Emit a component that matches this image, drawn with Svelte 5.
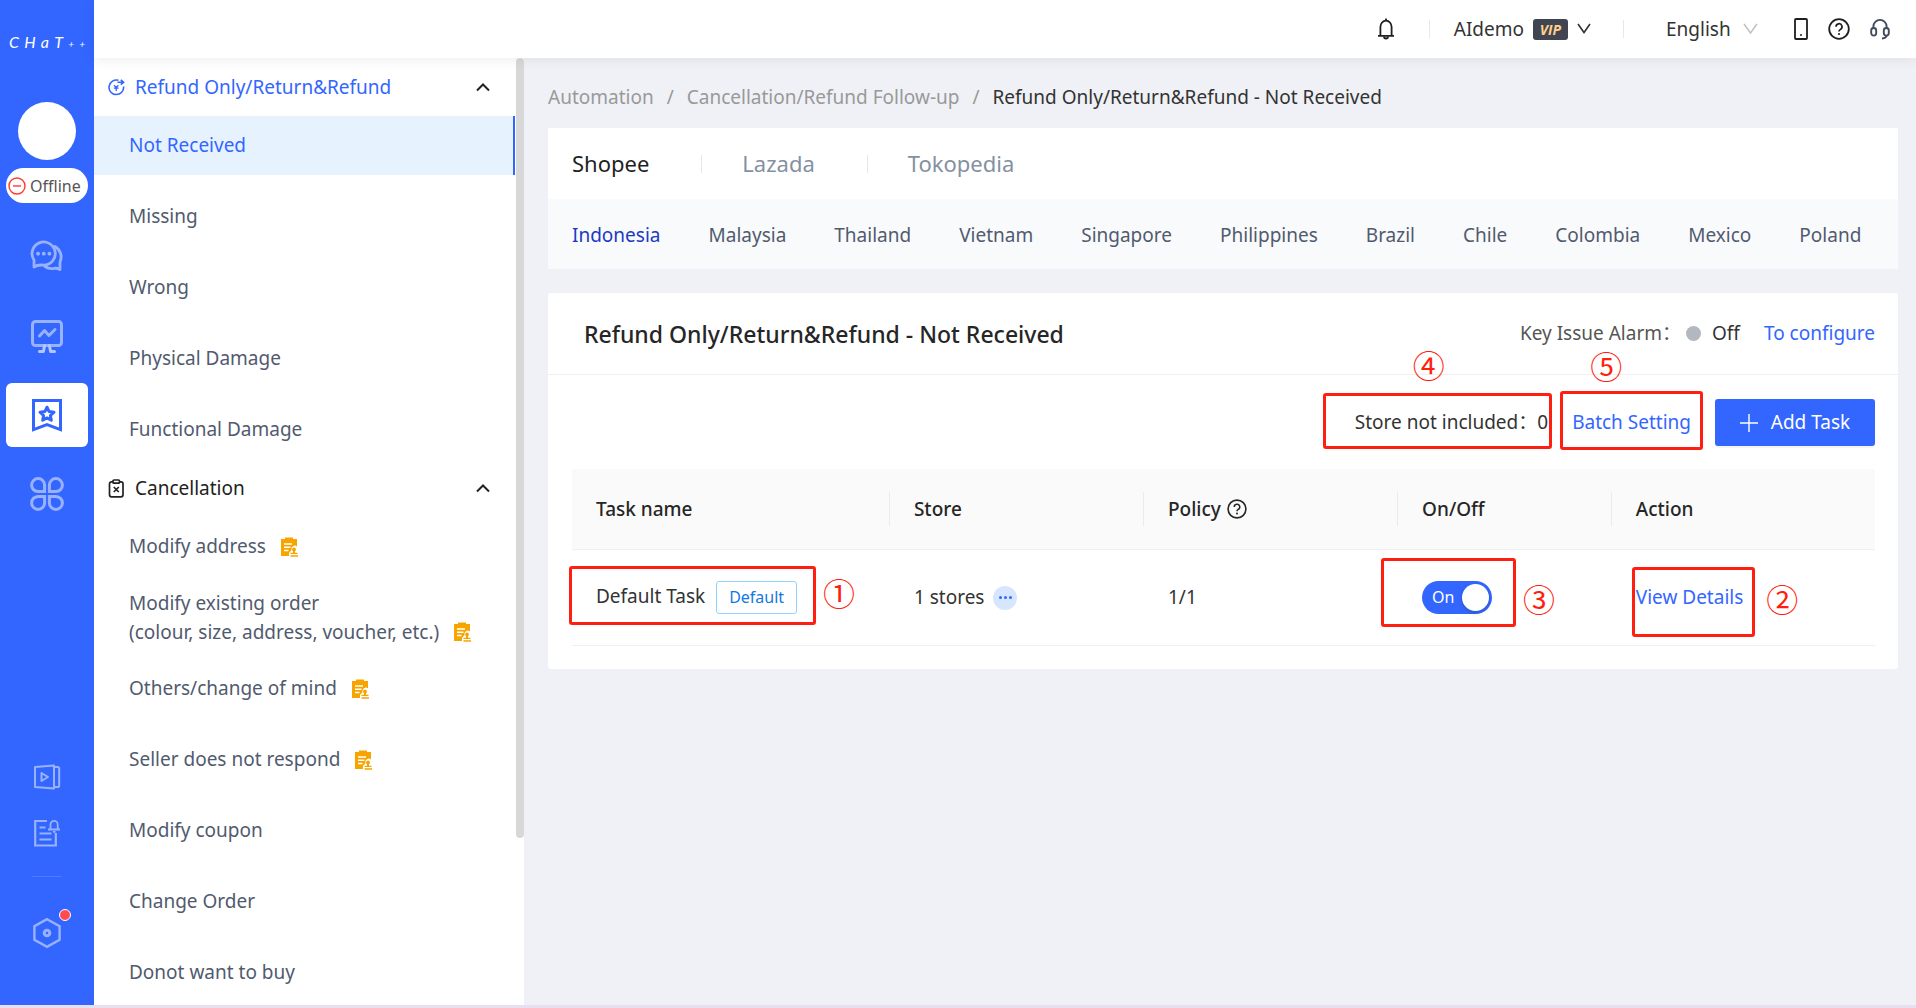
<script lang="ts">
  interface NavItem {
    label: string;
    detail?: string;
    manual?: boolean;
  }

  interface NavGroup {
    title: string;
    icon: 'refund' | 'cancel';
    items: NavItem[];
  }

  const groups: NavGroup[] = [
    {
      title: 'Refund Only/Return&Refund',
      icon: 'refund',
      items: [
        { label: 'Not Received' },
        { label: 'Missing' },
        { label: 'Wrong' },
        { label: 'Physical Damage' },
        { label: 'Functional Damage' }
      ]
    },
    {
      title: 'Cancellation',
      icon: 'cancel',
      items: [
        { label: 'Modify address', manual: true },
        {
          label: 'Modify existing order',
          detail: '(colour, size, address, voucher, etc.)',
          manual: true
        },
        { label: 'Others/change of mind', manual: true },
        { label: 'Seller does not respond', manual: true },
        { label: 'Modify coupon' },
        { label: 'Change Order' },
        { label: 'Donot want to buy' }
      ]
    }
  ];

  const platforms = ['Shopee', 'Lazada', 'Tokopedia'];
  const countries = [
    'Indonesia',
    'Malaysia',
    'Thailand',
    'Vietnam',
    'Singapore',
    'Philippines',
    'Brazil',
    'Chile',
    'Colombia',
    'Mexico',
    'Poland'
  ];

  let selected = $state('Not Received');
  let platform = $state('Shopee');
  let country = $state('Indonesia');
  let closed = $state<string[]>([]);
  let taskOn = $state(true);

  function toggleGroup(title: string) {
    closed = closed.includes(title) ? closed.filter((t) => t !== title) : [...closed, title];
  }
</script>

{#snippet question(size: number)}
  <svg width={size} height={size} viewBox="0 0 22 22" fill="none" stroke="currentColor" stroke-width="1.8">
    <circle cx="11" cy="11" r="9.8" />
    <path d="M8 8.8a3 3 0 1 1 4.4 2.6c-1 .5-1.4 1-1.4 2.1" stroke-width="1.7" />
    <circle cx="11" cy="16" r="1.1" fill="currentColor" stroke="none" />
  </svg>
{/snippet}

<div class="app">
  <aside class="rail">
    <a class="logo" href="#home" aria-label="Chat++">
      <span>C</span><span>H</span><span>a</span><span>T</span><span>+</span><span>+</span>
    </a>
    <div class="avatar"></div>
    <button class="status">
      <svg width="18" height="18" viewBox="0 0 18 18" fill="none" stroke="#ff3b30" stroke-width="1.4">
        <circle cx="9" cy="9" r="8" />
        <path d="M5 9h8" />
      </svg>
      Offline
    </button>

    <nav class="rail-main">
      <a href="#chat" aria-label="Chat">
        <svg width="36" height="36" viewBox="0 0 36 36" fill="none" stroke="currentColor" stroke-width="2.8" stroke-linejoin="round" stroke-linecap="round">
          <path d="M5 28V21A11.6 11.6 0 1 1 14.7 26.2Q9 25.3 5 28z" />
          <path d="M26 7.5A12 12 0 0 1 31 23V30.5Q28 28.8 25 29.4Q20 30.2 16 27.5" />
          <path d="M9 14.7h.1M14.7 14.7h.1M20.4 14.7h.1" stroke-width="3.8" />
        </svg>
      </a>
      <a href="#data" aria-label="Data">
        <svg width="36" height="36" viewBox="0 0 36 36" fill="none" stroke="currentColor" stroke-width="3" stroke-linejoin="round" stroke-linecap="round">
          <rect x="3.5" y="3.5" width="29" height="24" rx="3" />
          <path d="M10.5 18 15.5 12.5 20 17.5 26 11.5" />
          <path d="M15.6 27.5 14.4 33.5H10.5M20.4 27.5 21.6 33.5H25.5" stroke="#b3c6ff" />
        </svg>
      </a>
      <a class="active" href="#automation" aria-label="Automation">
        <svg width="30" height="33" viewBox="0 0 30 33" fill="none" stroke="currentColor" stroke-width="3">
          <path d="M1.5 1.5H28.5V30.6L15 25.6 1.5 30.6z" />
          <path d="M15 8.2 17.1 12.6 22 13.2 18.4 16.5 19.3 21.2 15 18.9 10.7 21.2 11.6 16.5 8 13.2 12.9 12.6z" stroke-linejoin="round" />
        </svg>
      </a>
      <a href="#apps" aria-label="Apps">
        <svg width="36" height="36" viewBox="0 0 36 36" fill="none" stroke="currentColor" stroke-width="3">
          <path d="M15.6 15.6H9a6.5 6.5 0 1 1 6.6-6.5z" />
          <path d="M20.4 15.6H27a6.5 6.5 0 1 0-6.6-6.5z" />
          <path d="M15.6 20.4H9a6.5 6.5 0 1 0 6.6 6.5z" />
          <path d="M20.4 20.4H27a6.5 6.5 0 1 1-6.6 6.5z" />
        </svg>
      </a>
    </nav>

    <div class="rail-foot">
      <a href="#tutorials" aria-label="Tutorials">
        <svg width="28" height="26" viewBox="0 0 28 26" fill="none" stroke="currentColor" stroke-width="2" stroke-linejoin="round">
          <path d="M2 3 21 1.6V24.4L2 23z" />
          <path d="M22 3h2.6a1.6 1.6 0 0 1 1.6 1.6v16.8a1.6 1.6 0 0 1-1.6 1.6H22" />
          <path d="M8.5 9v8l6.5-4z" />
        </svg>
      </a>
      <a href="#releases" aria-label="Release notes">
        <svg width="28" height="28" viewBox="0 0 28 28" fill="none" stroke="currentColor" stroke-width="2.2">
          <path d="M14 2H2.2V26.5H22.8V14" />
          <path d="M6.5 8.5h6M6.5 14.5h12M6.5 20.5h12" />
          <path d="M17.5 10V5.5a3.6 3.6 0 0 1 7.2 0V10M15 10.5h12M20 12.8h2.5" stroke-width="1.8" />
        </svg>
      </a>
      <hr />
      <a class="settings" href="#settings" aria-label="Settings">
        <svg width="30" height="32" viewBox="0 0 30 32" fill="none" stroke="currentColor" stroke-width="2.4">
          <path d="M15 2.2 27.6 9.2V22.8L15 29.8 2.4 22.8V9.2z" />
          <circle cx="15" cy="16" r="2.8" stroke-width="3" />
        </svg>
        <span class="dot"></span>
      </a>
    </div>
  </aside>

  <div class="page">
    <header class="topbar">
      <button class="icon-btn bell" aria-label="Notifications">
        <svg width="18" height="22" viewBox="0 0 18 22" fill="none" stroke="currentColor" stroke-width="1.8">
          <path d="M3.4 17.5V9a5.6 6.4 0 0 1 11.2 0v8.5M1 17.8h16M9 .6v2.2" />
          <path d="M7 18.5a2 2 0 0 0 4 0" />
        </svg>
      </button>
      <span class="rule"></span>
      <button class="account">
        AIdemo
        <span class="vip">VIP</span>
        <svg width="14" height="12" viewBox="0 0 14 12" fill="none" stroke="currentColor" stroke-width="1.6">
          <path d="M1 1l6 8.5L13 1" />
        </svg>
      </button>
      <span class="rule"></span>
      <label class="language">
        <select aria-label="Language">
          <option>English</option>
          <option>中文</option>
        </select>
        <svg width="15" height="12" viewBox="0 0 15 12" fill="none" stroke="#bfbfbf" stroke-width="1.4">
          <path d="M1 1l6.5 9L14 1" />
        </svg>
      </label>
      <div class="tools">
        <button class="icon-btn" aria-label="Mobile app">
          <svg width="14" height="22" viewBox="0 0 14 22" fill="none" stroke="currentColor" stroke-width="1.8">
            <rect x="1" y="1" width="12" height="20" rx="1" />
            <circle cx="7" cy="17" r="1" fill="currentColor" stroke="none" />
          </svg>
        </button>
        <button class="icon-btn" aria-label="Help">{@render question(22)}</button>
        <button class="icon-btn support" aria-label="Support">
          <svg width="20" height="22" viewBox="0 0 20 22" fill="none" stroke="currentColor" stroke-width="1.9">
            <path d="M3.4 10V8.5a6.6 6.6 0 0 1 13.2 0V10" />
            <rect x="1.2" y="10" width="5" height="7.6" rx="2.5" />
            <rect x="13.8" y="10" width="5" height="7.6" rx="2.5" />
            <path d="M16.8 17.5c-.6 1.8-2 2.9-4.8 3" />
          </svg>
        </button>
      </div>
    </header>

    <div class="body">
      <nav class="menu">
        {#each groups as group}
          <button
            class="group"
            class:current={group.icon === 'refund'}
            aria-expanded={!closed.includes(group.title)}
            onclick={() => toggleGroup(group.title)}
          >
            {#if group.icon === 'refund'}
              <svg width="17" height="17" viewBox="0 0 17 17" fill="none" stroke="currentColor" stroke-width="1.6">
                <path d="M10.5 1.3A7.3 7.3 0 1 0 15.6 7.5" />
                <path d="M9.5 3.2h6M12.8.8l2.8 2.4-2.8 2.4" />
                <path d="M6 6.2l2.2 2.3 2.2-2.3M8.2 8.5v3.6M5.8 9.2h4.8" stroke-width="1.3" />
              </svg>
            {:else}
              <svg width="17" height="19" viewBox="0 0 17 19" fill="none" stroke="currentColor" stroke-width="1.7">
                <rect x="1.5" y="2.8" width="13.5" height="15" rx="2" />
                <rect x="5" y="1" width="6.5" height="3.2" rx="1" fill="#fff" />
                <path d="M5.8 8l5 5M10.8 8l-5 5" />
              </svg>
            {/if}
            <span>{group.title}</span>
            <svg class="chevron" width="14" height="9" viewBox="0 0 14 9" fill="none" stroke="#222" stroke-width="2">
              <path d="M1 7.5l6-6 6 6" />
            </svg>
          </button>
          {#if !closed.includes(group.title)}
            <ul>
              {#each group.items as item}
                <li>
                  <a
                    href="#{item.label}"
                    class:selected={selected === item.label}
                    onclick={() => (selected = item.label)}
                  >
                    <span>
                      {item.label}
                      {#if item.detail}<br />{item.detail}{/if}
                    </span>
                    {#if item.manual}
                      <svg class:low={item.detail} width="17" height="20" viewBox="0 0 17 20" fill="#f7a400">
                        <path d="M0 2h4V.5h8V2h4v7.5a3.4 3.4 0 0 0-5.5 3.5l-2.5 3V19H0z" />
                        <path d="M3 7h8M3 10.2h6.5M3 13.4h4.5" stroke="#fff" stroke-width="1.5" />
                        <path d="M13 10.5a2 2 0 0 1 1 3.7v1.6h2.5V17h-7v-1.2H12v-1.6a2 2 0 0 1 1-3.7z" />
                        <path d="M9.5 18.2h7.5v1.5H9.5z" />
                      </svg>
                    {/if}
                  </a>
                </li>
              {/each}
            </ul>
          {/if}
        {/each}
        <div class="thumb"></div>
      </nav>

      <main>
        <ol class="crumbs">
          <li><a href="#automation">Automation</a></li>
          <li><a href="#follow-up">Cancellation/Refund Follow-up</a></li>
          <li aria-current="page">Refund Only/Return&amp;Refund - Not Received</li>
        </ol>

        <section class="filters">
          <div class="platforms">
            {#each platforms as name}
              <button class:on={platform === name} onclick={() => (platform = name)}>{name}</button>
            {/each}
          </div>
          <div class="countries">
            {#each countries as name}
              <button class:on={country === name} onclick={() => (country = name)}>{name}</button>
            {/each}
          </div>
        </section>

        <section class="card">
          <div class="card-head">
            <h1>Refund Only/Return&amp;Refund - Not Received</h1>
            <div class="alarm">
              <span class="alarm-label">Key Issue Alarm：</span>
              <span class="alarm-dot"></span>
              <span>Off</span>
              <a href="#configure">To configure</a>
            </div>
          </div>

          <div class="actions">
            <span class="marked stores-out">
              Store not included：0
              <span class="frame"></span>
              <span class="num">④</span>
            </span>
            <span class="marked batch">
              <a href="#batch">Batch Setting</a>
              <span class="frame"></span>
              <span class="num">⑤</span>
            </span>
            <button class="add">
              <svg width="18" height="18" viewBox="0 0 18 18" stroke="currentColor" stroke-width="1.4">
                <path d="M9 0v18M0 9h18" />
              </svg>
              Add Task
            </button>
          </div>

          <table>
            <thead>
              <tr>
                <th class="w-task">Task name</th>
                <th class="w-store">Store</th>
                <th class="w-policy"><span class="with-icon">Policy {@render question(20)}</span></th>
                <th class="w-switch">On/Off</th>
                <th>Action</th>
              </tr>
            </thead>
            <tbody>
              <tr>
                <td>
                  <span class="marked task">
                    Default Task <span class="tag">Default</span>
                    <span class="frame"></span>
                    <span class="num">①</span>
                  </span>
                </td>
                <td>
                  <span class="stores">
                    1 stores
                    <button class="more" aria-label="Show stores"><i></i><i></i><i></i></button>
                  </span>
                </td>
                <td>1/1</td>
                <td>
                  <span class="marked toggle">
                    <label class="switch" class:off={!taskOn}>
                      <input type="checkbox" role="switch" bind:checked={taskOn} />
                      <span>{taskOn ? 'On' : 'Off'}</span>
                      <span class="knob"></span>
                    </label>
                    <span class="frame"></span>
                    <span class="num">③</span>
                  </span>
                </td>
                <td>
                  <span class="marked view">
                    <a href="#details">View Details</a>
                    <span class="frame"></span>
                    <span class="num">②</span>
                  </span>
                </td>
              </tr>
            </tbody>
          </table>
        </section>
      </main>
    </div>
  </div>
</div>

<style>
  :global(body) {
    margin: 0;
  }

  .app {
    --blue: #3366ff;
    --mark: #ff1f10;
    display: flex;
    height: 100vh;
    box-sizing: border-box;
    border-bottom: 3px solid #e8e0f1;
    overflow: hidden;
    font-family: 'Noto Sans', 'Noto Sans CJK SC', sans-serif;
    font-size: 19px;
    line-height: 29px;
    color: #333;
    background: #eff1f6;
  }

  .app * {
    box-sizing: border-box;
  }

  svg {
    display: block;
    flex: none;
  }

  button,
  select {
    font: inherit;
    color: inherit;
    border: 0;
    padding: 0;
    background: none;
    cursor: pointer;
  }

  a {
    color: var(--blue);
    text-decoration: none;
  }

  ul,
  ol {
    list-style: none;
    margin: 0;
    padding: 0;
  }

  /* left rail */
  .rail {
    display: flex;
    flex-direction: column;
    align-items: center;
    flex: none;
    width: 94px;
    padding-top: 32px;
    background: var(--blue);
  }

  .logo {
    display: flex;
    align-items: center;
    justify-content: space-between;
    width: 76px;
    height: 20px;
    color: #fff;
    font: italic 16px/20px Lato, sans-serif;
  }

  .logo span:nth-child(n + 5) {
    font-size: 10px;
    line-height: 10px;
    padding-top: 4px;
  }

  .avatar {
    width: 58px;
    height: 58px;
    margin-top: 50px;
    border-radius: 50%;
    background: #fff;
  }

  .status {
    display: flex;
    align-items: center;
    gap: 4px;
    width: 82px;
    height: 35px;
    margin-top: 8px;
    padding: 1px 0 0 2px;
    border-radius: 18px;
    background: #fff;
    color: #555;
    font-size: 16px;
  }

  .rail-main {
    display: flex;
    flex-direction: column;
    align-items: center;
    gap: 15px;
    margin-top: 22px;
  }

  .rail-main a {
    display: flex;
    align-items: center;
    justify-content: center;
    width: 82px;
    height: 64px;
    border-radius: 6px;
    color: #99b2ff;
  }

  .rail-main a.active {
    background: #fff;
    color: var(--blue);
  }

  .rail-foot {
    display: flex;
    flex-direction: column;
    align-items: center;
    margin-top: auto;
    margin-bottom: 56px;
  }

  .rail-foot a {
    position: relative;
    display: block;
    margin-bottom: 29px;
    color: #99b2ff;
  }

  .rail-foot hr {
    width: 30px;
    height: 1px;
    margin: 0 0 40px;
    border: 0;
    background: #4d7aff;
  }

  .rail-foot .settings {
    margin: 0;
  }

  .dot {
    position: absolute;
    top: -8px;
    right: -9px;
    width: 12px;
    height: 12px;
    border: 1px solid #fff;
    border-radius: 50%;
    background: #ff4d4f;
  }

  /* top bar */
  .page {
    display: flex;
    flex-direction: column;
    flex: 1;
    min-width: 0;
  }

  .topbar {
    position: relative;
    z-index: 1;
    display: flex;
    align-items: center;
    justify-content: flex-end;
    flex: none;
    height: 58px;
    padding-right: 26px;
    background: #fff;
    box-shadow: 0 2px 12px rgba(0, 21, 41, 0.07);
  }

  .bell {
    margin-right: 34px;
  }

  .rule {
    width: 1px;
    height: 18px;
    background: #e8e8e8;
  }

  .account {
    display: flex;
    align-items: center;
    gap: 9px;
    margin: 0 32px 0 24px;
  }

  .vip {
    width: 35px;
    height: 21px;
    border-radius: 3px;
    background: #414552;
    color: #ffd08a;
    font: italic bold 14px/21px 'Open Sans', sans-serif;
    text-align: center;
  }

  .language {
    display: flex;
    align-items: center;
    gap: 12px;
    margin: 0 36px 0 42px;
  }

  select {
    appearance: none;
    outline: none;
  }

  .tools {
    display: flex;
    align-items: center;
    gap: 20px;
  }

  .icon-btn {
    color: #1f1f1f;
  }

  .support {
    color: #3f4a5e;
  }

  /* menu */
  .body {
    display: flex;
    flex: 1;
    min-height: 0;
  }

  .menu {
    position: relative;
    flex: none;
    width: 430px;
    padding-right: 9px;
    overflow: hidden;
    background: #fff;
  }

  .group {
    display: flex;
    align-items: center;
    gap: 10px;
    width: 100%;
    height: 58px;
    padding: 0 25px 0 14px;
    text-align: left;
    color: #222;
  }

  .group.current {
    color: var(--blue);
  }

  .group span {
    flex: 1;
  }

  .menu ul {
    display: grid;
    gap: 12px;
  }

  .menu li a {
    display: flex;
    align-items: center;
    gap: 15px;
    height: 59px;
    padding-left: 35px;
    color: #515a6e;
    border-right: 2px solid transparent;
  }

  .menu li a.selected {
    color: var(--blue);
    background: #e7f2ff;
    border-color: var(--blue);
  }

  .low {
    align-self: flex-end;
    margin-bottom: 5px;
  }

  .thumb {
    position: absolute;
    top: 0;
    right: 0;
    width: 8px;
    height: 82.4%;
    border-radius: 4px;
    background: #d8d8d8;
  }

  /* content */
  main {
    flex: 1;
    min-width: 0;
    padding: 25px 18px 0 24px;
  }

  .crumbs {
    display: flex;
    color: #333;
  }

  .crumbs a,
  .crumbs li + li::before {
    color: #999;
  }

  .crumbs li + li::before {
    content: '/';
    margin: 0 13px;
  }

  .filters {
    margin-top: 16px;
    background: #fff;
  }

  .platforms {
    display: flex;
    align-items: center;
    height: 71px;
    padding-left: 24px;
    font-size: 22px;
    color: #8590a2;
  }

  .platforms button {
    display: flex;
    align-items: center;
  }

  .platforms .on {
    color: #1f1f1f;
  }

  .platforms button + button::before {
    content: '';
    width: 1px;
    height: 18px;
    margin: 0 40px 0 52px;
    background: #e8e8e8;
  }

  .countries {
    display: flex;
    align-items: center;
    gap: 48px;
    height: 70px;
    padding: 2px 0 0 24px;
    background: #f9fafc;
    color: #515a6e;
  }

  .countries .on {
    color: #1d39c4;
  }

  .card {
    margin-top: 24px;
    padding-bottom: 23px;
    border-radius: 3px;
    background: #fff;
  }

  .card-head {
    display: flex;
    align-items: center;
    justify-content: space-between;
    height: 82px;
    padding: 0 23px 0 36px;
    border-bottom: 1px solid #f0f0f0;
  }

  h1 {
    margin: 0;
    font-size: 23px;
    line-height: 32px;
    font-weight: 500;
    color: #262626;
  }

  .alarm {
    display: flex;
    align-items: center;
  }

  .alarm-label {
    color: #555;
  }

  .alarm-dot {
    width: 15px;
    height: 15px;
    margin: 0 11px 0 5px;
    border-radius: 50%;
    background: #b3b7c0;
  }

  .alarm a {
    margin-left: 24px;
  }

  .actions {
    display: flex;
    align-items: center;
    justify-content: flex-end;
    gap: 24px;
    padding: 24px 23px 23px;
  }

  .add {
    display: flex;
    align-items: center;
    justify-content: center;
    gap: 13px;
    width: 160px;
    height: 47px;
    border-radius: 3px;
    background: var(--blue);
    color: #fff;
    box-shadow: 0 2px 0 rgba(0, 0, 0, 0.04);
  }

  table {
    width: calc(100% - 47px);
    margin-left: 24px;
    border-collapse: collapse;
    table-layout: fixed;
  }

  th,
  td {
    padding: 1px 24px 0;
    text-align: left;
    white-space: nowrap;
    border-bottom: 1px solid #f0f0f0;
  }

  th {
    position: relative;
    height: 80px;
    background: #fafafa;
    color: #262626;
    font-weight: 500;
  }

  th:not(:last-child)::after {
    content: '';
    position: absolute;
    top: 23px;
    right: 0;
    width: 1px;
    height: 34px;
    background: #ebebeb;
  }

  td {
    height: 96px;
  }

  .w-task {
    width: 24.4%;
  }

  .w-store,
  .w-policy {
    width: 19.5%;
  }

  .w-switch {
    width: 16.4%;
  }

  .with-icon,
  .stores {
    display: flex;
    align-items: center;
    gap: 6px;
  }

  .tag {
    display: inline-block;
    height: 33px;
    margin-left: 6px;
    padding: 0 12px;
    border: 1px solid #91d5ff;
    border-radius: 3px;
    color: #1378e0;
    font-size: 16px;
    line-height: 31px;
  }

  .more {
    display: flex;
    align-items: center;
    justify-content: center;
    gap: 2px;
    width: 24px;
    height: 24px;
    margin-left: 3px;
    border-radius: 50%;
    background: #d6e6ff;
  }

  .more i {
    width: 3px;
    height: 3px;
    border-radius: 50%;
    background: var(--blue);
  }

  .switch {
    position: relative;
    display: flex;
    align-items: center;
    justify-content: space-between;
    width: 70px;
    height: 33px;
    padding: 0 3px 0 10px;
    border-radius: 17px;
    background: var(--blue);
    color: #fff;
    font-size: 16px;
    cursor: pointer;
  }

  .switch.off {
    flex-direction: row-reverse;
    padding: 0 10px 0 3px;
    background: #bfbfbf;
  }

  .switch input {
    position: absolute;
    inset: 0;
    margin: 0;
    opacity: 0;
  }

  .knob {
    width: 27px;
    height: 27px;
    border-radius: 50%;
    background: #fff;
    box-shadow: 0 2px 4px rgba(0, 35, 11, 0.2);
  }

  /* numbered callouts laid over the controls */
  .marked {
    position: relative;
    display: inline-block;
  }

  .frame {
    position: absolute;
    border: 3px solid var(--mark);
    border-radius: 3px;
    pointer-events: none;
  }

  .num {
    position: absolute;
    color: var(--mark);
    font-family: 'Noto Sans CJK SC', sans-serif;
    font-size: 32px;
    line-height: 32px;
  }

  .stores-out .frame {
    inset: -15px -4px -12px -32px;
  }

  .stores-out .num {
    top: -60px;
    left: 58px;
  }

  .batch .frame {
    inset: -17px -12px -13px -12px;
  }

  .batch .num {
    top: -59px;
    left: 18px;
  }

  .task .frame {
    inset: -15px -19px -11px -27px;
  }

  .task .num {
    top: -5px;
    right: -58px;
  }

  .toggle .frame {
    inset: -23px -24px -13px -41px;
  }

  .toggle .num {
    top: 1px;
    right: -63px;
  }

  .view .frame {
    inset: -16px -12px -25px -4px;
  }

  .view .num {
    top: -1px;
    right: -55px;
  }
</style>
